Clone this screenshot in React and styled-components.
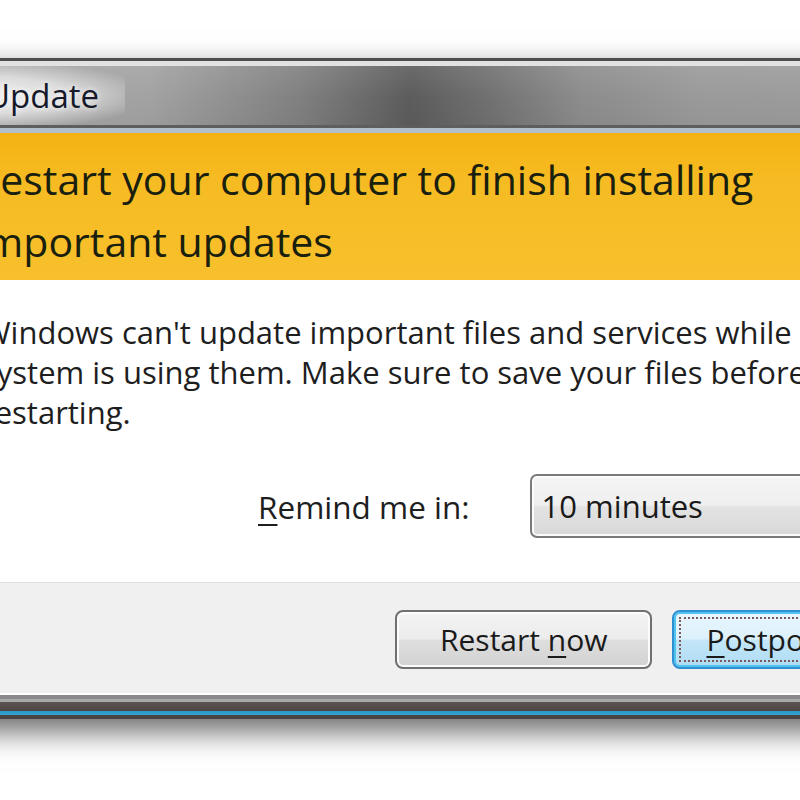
import React from "react";
import styled, { createGlobalStyle } from "styled-components";

const Global = createGlobalStyle`
  html, body {
    margin: 0;
    padding: 0;
    background: #ffffff;
    overflow: hidden;
  }
  body {
    font-family: "Open Sans", "Noto Sans", "Liberation Sans", sans-serif;
  }
`;

const Page = styled.div`
  width: 800px;
  height: 800px;
  overflow: hidden;
  padding-top: 58px;
  box-sizing: border-box;
`;

const Window = styled.div`
  width: 900px;
  margin-left: -40px;
  display: flex;
  flex-direction: column;
  box-shadow: 0 12px 28px rgba(0, 0, 0, 0.6);
`;

const TitleBar = styled.div`
  height: 70px;
  box-sizing: border-box;
  border-top: 3px solid #4d4d4d;
  padding-top: 5px;
  padding-bottom: 3px;
  display: flex;
  align-items: center;
  overflow: hidden;
  background:
    linear-gradient(180deg, #e2e2e2 0, #e2e2e2 5px, transparent 5px, transparent calc(100% - 3px), #5e5e5e calc(100% - 3px)),
    linear-gradient(180deg, rgba(255,255,255,0.10), rgba(255,255,255,0) 55%, rgba(0,0,0,0.04)),
    linear-gradient(90deg, #a9a9a9 0px, #a2a2a2 190px, #808080 340px, #5c5c5c 450px, #6e6e6e 520px, #8c8c8c 620px, #9a9a9a 740px, #9c9c9c 900px);
`;

const TitleText = styled.span`
  display: inline-block;
  flex-shrink: 0;
  margin-left: -149px;
  font-size: 33px;
  line-height: 59px;
  padding: 0 26px;
  color: #15192a;
  background: radial-gradient(ellipse 60% 60% at 50% 50%, rgba(250,250,250,0.95) 0%, rgba(235,235,235,0.75) 55%, rgba(200,200,200,0) 100%);
  text-shadow: 0 0 6px rgba(255,255,255,0.9);
  white-space: nowrap;
`;

const Banner = styled.div`
  border-top: 5px solid #b3bfcb;
  padding: 15px 0 8px 15px;
  background: linear-gradient(180deg, #f4b212 0%, #f6bb22 30%, #f7c02c 100%);
`;

const Heading = styled.div`
  font-size: 41px;
  line-height: 62px;
  color: #1a200e;
  white-space: nowrap;
`;

const Content = styled.div`
  background: #ffffff;
  padding: 32px 0 44px 22px;
  display: flex;
  flex-direction: column;
`;

const BodyText = styled.div`
  font-size: 31px;
  line-height: 40px;
  color: #1e1e1e;
  white-space: nowrap;
`;

const RemindRow = styled.div`
  margin-top: 42px;
  padding-left: 276px;
  display: flex;
  align-items: center;
  gap: 60px;
`;

const Label = styled.span`
  font-size: 31.5px;
  color: #1e1e1e;
  white-space: nowrap;
`;

const Key = styled.span`
  text-decoration: underline;
  text-decoration-thickness: 2px;
  text-underline-offset: 5px;
`;

const Select = styled.div`
  width: 360px;
  height: 64px;
  box-sizing: border-box;
  border: 2px solid #7a7a7a;
  border-radius: 7px;
  box-shadow: inset 0 0 0 2px #fbfbfb;
  background: linear-gradient(180deg, #f4f4f4 0%, #efefef 48%, #e3e3e3 52%, #d8d8d8 100%);
  display: flex;
  align-items: center;
  padding-left: 10px;
  font-size: 31px;
  color: #1a1a1a;
  white-space: nowrap;
`;

const Footer = styled.div`
  border-top: 1px solid #dedede;
  border-bottom: 2px solid #ffffff;
  background: #f0f0f0;
  height: 113px;
  box-sizing: border-box;
  padding: 27px 0 0 435px;
  display: flex;
  align-items: flex-start;
  gap: 20px;
`;

const Button = styled.button`
  height: 59px;
  box-sizing: border-box;
  padding: 5px;
  border-radius: 8px;
  border: 2px solid ${(p) => (p.$focused ? "#2f8fd3" : "#707070")};
  box-shadow: inset 0 0 0 2px ${(p) => (p.$focused ? "#4ec4ef" : "#fcfcfc")};
  background: ${(p) =>
    p.$focused
      ? "linear-gradient(180deg, #eaf6fd 0%, #dcf1fc 48%, #c3e6f8 52%, #aedcf3 100%)"
      : "linear-gradient(180deg, #f3f3f3 0%, #ececec 48%, #dedede 52%, #d2d2d2 100%)"};
  font-family: inherit;
  font-size: 30px;
  color: #1a1a1a;
  display: flex;
  flex-shrink: 0;
  cursor: default;
`;

const ButtonFace = styled.span`
  display: block;
  box-sizing: border-box;
  height: 45px;
  line-height: 41px;
  text-align: center;
  padding: 0 ${(p) => (p.$focused ? "25px" : "36px")};
  border: 2px dotted ${(p) => (p.$focused ? "#7a5a5a" : "transparent")};
  white-space: nowrap;
`;

const FrameBottom = styled.div`
  height: 24px;
  background: linear-gradient(
    180deg,
    #8a8a8a 0px, #8a8a8a 4px,
    #a8a8a8 4px, #a8a8a8 7px,
    #5c5252 7px, #4d4545 16px,
    #2b97c6 16px, #33a7d4 20px,
    #4a4545 20px, #4a4545 24px
  );
`;

export default function App() {
  return (
    <>
      <Global />
      <Page>
        <Window>
          <TitleBar>
            <TitleText>Windows Update</TitleText>
          </TitleBar>
          <Banner>
            <Heading>
              Restart your computer to finish installing
              <br />
              important updates
            </Heading>
          </Banner>
          <Content>
            <BodyText>
              Windows can't update important files and services while the
              <br />
              system is using them. Make sure to save your files before
              <br />
              restarting.
            </BodyText>
            <RemindRow>
              <Label>
                <Key>R</Key>emind me in:
              </Label>
              <Select>10 minutes</Select>
            </RemindRow>
          </Content>
          <Footer>
            <Button>
              <ButtonFace>
                Restart <Key>n</Key>ow
              </ButtonFace>
            </Button>
            <Button $focused>
              <ButtonFace $focused>
                <Key>P</Key>ostpone
              </ButtonFace>
            </Button>
          </Footer>
          <FrameBottom />
        </Window>
      </Page>
    </>
  );
}
